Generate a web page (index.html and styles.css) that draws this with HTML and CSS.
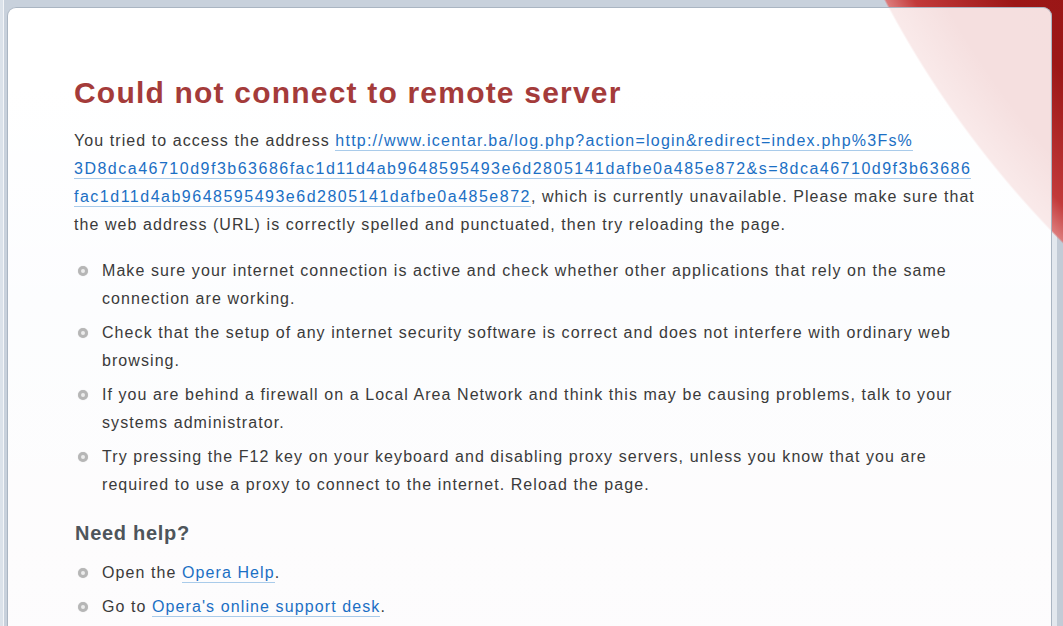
FILE: index.html
```html
<!DOCTYPE html>
<html lang="en">
<head>
<meta charset="utf-8">
<title>Could not connect to remote server</title>
<link rel="stylesheet" href="styles.css">
</head>
<body>
<div class="frame">
  <div class="card">
    <div class="content">
      <h1 class="title">Could not connect to remote server</h1>
      <p class="intro">You tried to access the address <a href="#" class="link">http://www.icentar.ba/log.php?action=login&amp;redirect=index.php%3Fs%<br><span class="hex">3D8dca46710d9f3b63686fac1d11d4ab9648595493e6d2805141dafbe0a485e872&amp;s=8dca46710d9f3b63686</span><br><span class="hex">fac1d11d4ab9648595493e6d2805141dafbe0a485e872</span></a>, which is currently unavailable. Please make sure that the web address (URL) is correctly spelled and punctuated, then try reloading the page.</p>
      <ul class="tips">
        <li class="tip"><span class="dot"></span><span class="tip-text">Make sure your internet connection is active and check whether other applications that rely on the same connection are working.</span></li>
        <li class="tip"><span class="dot"></span><span class="tip-text">Check that the setup of any internet security software is correct and does not interfere with ordinary web browsing.</span></li>
        <li class="tip"><span class="dot"></span><span class="tip-text">If you are behind a firewall on a Local Area Network and think this may be causing problems, talk to your systems administrator.</span></li>
        <li class="tip"><span class="dot"></span><span class="tip-text">Try pressing the F12 key on your keyboard and disabling proxy servers, unless you know that you are required to use a proxy to connect to the internet. Reload the page.</span></li>
      </ul>
      <h2 class="subtitle">Need help?</h2>
      <ul class="tips help">
        <li class="tip"><span class="dot"></span><span class="tip-text">Open the <a href="#" class="link">Opera Help</a>.</span></li>
        <li class="tip"><span class="dot"></span><span class="tip-text">Go to <a href="#" class="link">Opera's online support desk</a>.</span></li>
      </ul>
    </div>
  </div>
</div>
</body>
</html>
```

FILE: styles.css
```css
html, body {
  margin: 0;
  padding: 0;
  height: 100%;
  overflow: hidden;
}

body {
  font-family: "Liberation Sans", Arial, sans-serif;
  background: #c6d0dc;
}

.frame {
  height: 100%;
  box-sizing: border-box;
  padding: 7px 11px 0 7px;
  background:
    radial-gradient(circle at 1780px -470px, #7a0c0c 0, #9c1717 900px, #c23a3a 985px, #dc7a7a 1010px, transparent 1012px) fixed,
    linear-gradient(to right, #dbe2ea 0, #dbe2ea 3px, #f3f5f8 3px, #f3f5f8 4px, #c8d1dc 4px, #c8d1dc 1051px, #e3e8ee 1051px, #e3e8ee 1057px, #c2cbd6 1057px) fixed,
    #c6d0dc;
}

.card {
  height: 100%;
  box-sizing: border-box;
  border: 1px solid #aab5c2;
  border-bottom: 0;
  border-radius: 9px 9px 0 0;
  padding: 67px 0 0 66px;
  background:
    linear-gradient(rgba(255, 255, 255, 0.84), rgba(255, 255, 255, 0.84)) fixed,
    radial-gradient(circle at 1780px -470px, #b02a2a 0, #c23a3a 960px, #dc7a7a 1010px, transparent 1012px) fixed,
    linear-gradient(to bottom, #ffffff 0, #ffffff 90px, #eef2fb 300px, #f0f0f6 430px, #f3ebf1 626px) fixed;
}

.content {
  width: 902px;
  color: #3a3a3a;
  font-size: 16px;
  line-height: 28px;
  letter-spacing: 1.07px;
}

.title {
  margin: 0 0 16px;
  font-size: 30px;
  line-height: 36px;
  font-weight: bold;
  letter-spacing: 1.2px;
  color: #a43b3a;
}

.intro {
  margin: 0 0 18px;
}

.link {
  color: #1b6fc4;
  text-decoration: none;
  letter-spacing: 1.22px;
  padding-bottom: 1px;
  border-bottom: 1px solid #a9cbea;
}

.hex {
  letter-spacing: 1.5px;
}

.tips {
  list-style: none;
  margin: 0;
  padding: 0;
}

.tip {
  display: flex;
  align-items: flex-start;
  margin: 0 0 6px;
}

.dot {
  flex: none;
  width: 4px;
  height: 4px;
  margin: 9px 14px 0 4px;
  border: 3px solid #b6b6b6;
  border-radius: 50%;
  background: #ececec;
  box-shadow: 0 0 1px #cfcfcf;
}

.tip-text {
  flex: 1;
}

.help .link {
  letter-spacing: 1.1px;
}

.subtitle {
  margin: 22px 0 14px 1px;
  font-size: 20px;
  line-height: 24px;
  font-weight: bold;
  letter-spacing: 0.7px;
  color: #4e555b;
}
```
